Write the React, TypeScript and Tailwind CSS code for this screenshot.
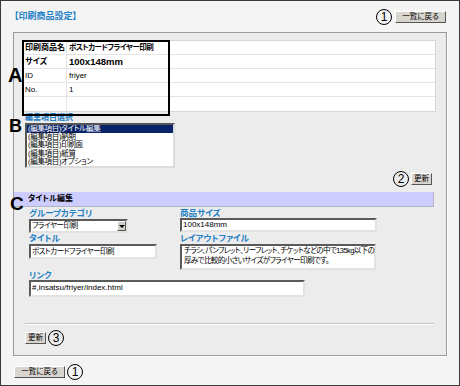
import React from 'react'

const jp = "font-['Liberation_Sans','Noto_Sans_CJK_JP',sans-serif] [font-feature-settings:'palt']"

function Btn({ label, w }: { label: string; w: string }) {
    return (
        <div
            className={`${w} h-[12px] flex items-center justify-center bg-[#d8d5cf] border border-t-white border-l-white border-r-[#555] border-b-[#555] text-[7.5px] leading-none text-black`}
        >
            {label}
        </div>
    )
}

// circled number marker
function Circ({ n }: { n: string }) {
    return (
        <span className="w-[16px] h-[16px] rounded-full border-[1.5px] border-black flex items-center justify-center text-[12px] leading-none text-black font-['Liberation_Sans',sans-serif]">
            {n}
        </span>
    )
}

function Field({ children, className }: { children?: React.ReactNode; className: string }) {
    return (
        <div
            className={`${className} bg-white border-2 border-t-[#5a5a5a] border-l-[#5a5a5a] border-r-[#e2e2e2] border-b-[#e2e2e2] text-black px-[1px]`}
        >
            {children}
        </div>
    )
}

const rows = [
    { k: '印刷商品名', v: 'ポストカードフライヤー印刷', bold: true },
    { k: 'サイズ', v: '100x148mm', bold: true, big: true },
    { k: 'ID', v: 'friyer' },
    { k: 'No.', v: '1' },
    { k: '', v: '' },
]

const items = ['(編集項目)タイトル編集', '(編集項目)納期', '(編集項目)印刷面', '(編集項目)紙質', '(編集項目)オプション']

export default function App() {
    return (
        <div className={`w-[460px] h-[386px] border border-[#3a3a3a] bg-[#f4f4f4] relative ${jp}`}>
            {/* header */}
            <div className="h-[31px] flex items-center justify-between pl-[13px] pr-[13px]">
                <span className="text-[9px] font-bold text-[#1f80c6]">【印刷商品設定】</span>
                <div className="flex items-center gap-[3px]">
                    <Circ n="1" />
                    <Btn label="一覧に戻る" w="w-[51px]" />
                </div>
            </div>

            {/* main panel */}
            <div className="ml-[12px] w-[434px] h-[324px] border border-[#9a9a9a] bg-[#ececec] shadow-[1px_1px_0_#fff]">
                {/* product table */}
                <div className="relative mt-[7px] ml-[8px] w-[414px] border border-[#d6d6d6] bg-white">
                    {rows.map((r, i) => (
                        <div key={i} className={`flex h-[14px] ${i < 4 ? 'border-b border-[#e4e4e4]' : ''}`}>
                            <div className={`w-[44px] pl-[2px] border-r border-[#e4e4e4] text-[8px] leading-[14px] ${r.bold ? 'font-bold' : ''}`}>{r.k}</div>
                            <div
                                className={`pl-[2px] leading-[14px] ${r.big ? 'text-[9.5px]' : i === 0 ? 'text-[7.5px] tracking-[-0.5px]' : 'text-[8px]'} ${r.bold ? 'font-bold' : ''}`}
                            >
                                {r.v}
                            </div>
                        </div>
                    ))}
                    <div className="absolute left-[-1px] top-[-1px] w-[148px] h-[76px] border-2 border-black" />
                </div>

                {/* edit item select */}
                <div className="ml-[11px] mt-[1px]">
                    <div className="h-[10px] text-[8px] leading-[10px] font-bold text-[#1f80c6]">編集項目選択</div>
                    <div className="w-[150px] h-[45px] bg-white border-2 border-t-[#555] border-l-[#555] border-r-[#dcdcdc] border-b-[#dcdcdc] overflow-hidden">
                        {items.map((t, i) => (
                            <div
                                key={i}
                                className={`h-[8.2px] leading-[8.2px] text-[7.5px] tracking-[-0.3px] pl-[1px] ${i === 0 ? 'bg-[#0a246a] text-white' : 'text-black'}`}
                            >
                                {t}
                            </div>
                        ))}
                    </div>
                </div>

                {/* update 2 */}
                <div className="flex justify-end items-center gap-[2px] pr-[14px] mt-[3px]">
                    <Circ n="2" />
                    <Btn label="更新" w="w-[21px]" />
                </div>

                {/* section bar */}
                <div className="mt-[5px] w-[420px] h-[15px] bg-[#ccccff] border-b border-r border-[#b4b4c8] pl-[14px] text-[8px] leading-[14px] font-bold text-black">
                    タイトル編集
                </div>

                {/* form */}
                <div className="ml-[15px] grid grid-cols-[151px_1fr]">
                    <div>
                        <div className="mt-[1px] h-[11px] leading-[11px] text-[8.5px] font-bold text-[#1f80c6]">グループカテゴリ</div>
                        <div className="w-[99px] h-[14px] flex bg-white border-2 border-t-[#5a5a5a] border-l-[#5a5a5a] border-r-[#e2e2e2] border-b-[#e2e2e2]">
                            <div className="flex-1 text-[7.5px] tracking-[-0.4px] leading-[10px] pl-[1px]">フライヤー印刷</div>
                            <div className="w-[9px] h-[10px] bg-[#d4d0c8] border border-t-white border-l-white border-r-[#555] border-b-[#555] flex items-center justify-center">
                                <div className="w-0 h-0 border-l-[3px] border-r-[3px] border-t-[3px] border-l-transparent border-r-transparent border-t-black" />
                            </div>
                        </div>
                    </div>
                    <div>
                        <div className="mt-[1px] h-[11px] leading-[11px] text-[8.5px] font-bold text-[#1f80c6]">商品サイズ</div>
                        <Field className="w-[197px] h-[14px] leading-[10px] text-[8px] -mt-[1px]">100x148mm</Field>
                    </div>

                    <div>
                        <div className="h-[11px] leading-[11px] text-[8.5px] font-bold text-[#1f80c6]">タイトル</div>
                        <Field className="w-[128px] h-[15px] leading-[11px] text-[7.5px] tracking-[-0.5px]">ポストカードフライヤー印刷</Field>
                    </div>
                    <div>
                        <div className="h-[11px] leading-[11px] text-[8.5px] font-bold text-[#1f80c6]">レイアウトファイル</div>
                        <Field className="w-[196px] h-[26px] leading-[10px] text-[7.5px] tracking-[-0.6px] whitespace-nowrap pl-[2px]">
                            チラシ、パンフレット、リーフレット、チケットなどの中で135kg以下の
                            <br />
                            厚みで比較的小さいサイズがフライヤー印刷です。
                        </Field>
                    </div>
                </div>
                <div className="ml-[15px]">
                    <div className="h-[10px] leading-[10px] text-[8.5px] font-bold text-[#1f80c6]">リンク</div>
                    <Field className="w-[276px] h-[17px] leading-[11px] text-[8px]">#,insatsu/friyer/index.html</Field>
                </div>

                {/* divider */}
                <div className="ml-[11px] mt-[26px] w-[409px] h-[2px] border-t border-b border-t-[#c4c4c4] border-b-white" />

                {/* update 3 */}
                <div className="ml-[11px] mt-[5px] flex items-center gap-[2px]">
                    <Btn label="更新" w="w-[21px]" />
                    <Circ n="3" />
                </div>
            </div>

            {/* bottom back */}
            <div className="pl-[13px] mt-[8px] flex items-center gap-[2px]">
                <Btn label="一覧に戻る" w="w-[51px]" />
                <Circ n="1" />
            </div>

            {/* annotation letters */}
            <span className="absolute left-[7px] top-[64px] text-[20px] leading-none font-bold font-['Liberation_Sans',sans-serif] text-black">A</span>
            <span className="absolute left-[8px] top-[116px] text-[18px] leading-none font-bold font-['Liberation_Sans',sans-serif] text-black">B</span>
            <span className="absolute left-[9px] top-[193px] text-[19px] leading-none font-bold font-['Liberation_Sans',sans-serif] text-black">C</span>
        </div>
    )
}
